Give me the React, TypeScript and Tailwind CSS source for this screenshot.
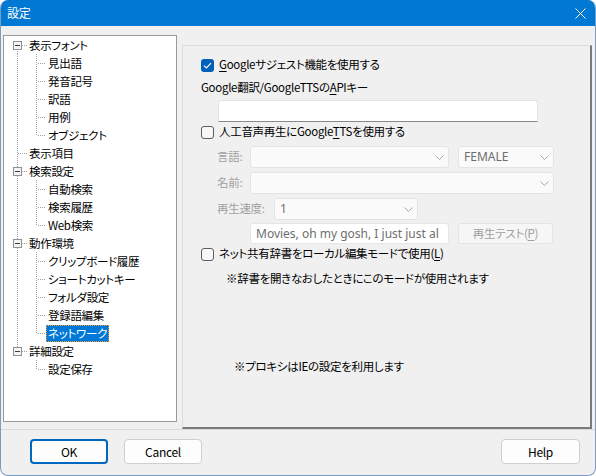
import React from "react";

type Node = { label: string; level: 0 | 1; hasChildren?: boolean; firstRoot?: boolean; lastRoot?: boolean; lastChild?: boolean; parentLast?: boolean; selected?: boolean };

const nodes: Node[] = [
  { label: "表示フォント", level: 0, hasChildren: true, firstRoot: true },
  { label: "見出語", level: 1 },
  { label: "発音記号", level: 1 },
  { label: "訳語", level: 1 },
  { label: "用例", level: 1 },
  { label: "オブジェクト", level: 1, lastChild: true },
  { label: "表示項目", level: 0 },
  { label: "検索設定", level: 0, hasChildren: true },
  { label: "自動検索", level: 1 },
  { label: "検索履歴", level: 1 },
  { label: "Web検索", level: 1, lastChild: true },
  { label: "動作環境", level: 0, hasChildren: true },
  { label: "クリップボード履歴", level: 1 },
  { label: "ショートカットキー", level: 1 },
  { label: "フォルダ設定", level: 1 },
  { label: "登録語編集", level: 1 },
  { label: "ネットワーク", level: 1, lastChild: true, selected: true },
  { label: "詳細設定", level: 0, hasChildren: true, lastRoot: true },
  { label: "設定保存", level: 1, lastChild: true, parentLast: true },
];

const DOT = "#a0a0a0";

function RootGutter({ n }: { n: Node }) {
  const x = 13.5;
  let v: React.ReactNode = null;
  if (n.level === 0) {
    const y1 = n.firstRoot ? 9 : 0;
    const y2 = n.lastRoot ? 9 : 18;
    v = <line x1={x} y1={y1} x2={x} y2={y2} stroke={DOT} strokeDasharray="1 1" />;
  } else if (!n.parentLast) {
    v = <line x1={x} y1={0} x2={x} y2={18} stroke={DOT} strokeDasharray="1 1" />;
  }
  return (
    <svg width="23" height="18" className="shrink-0" shapeRendering="crispEdges">
      {v}
      {n.level === 0 && <line x1={14} y1={9.5} x2={23} y2={9.5} stroke={DOT} strokeDasharray="1 1" />}
      {n.level === 0 && n.hasChildren && (
        <g>
          <rect x={9.5} y={5.5} width={8} height={8} fill="#f4f4f4" stroke="#919191" />
          <line x1={11} y1={9.5} x2={16} y2={9.5} stroke="#3c3c3c" />
        </g>
      )}
    </svg>
  );
}

function ChildGutter({ n }: { n: Node }) {
  const x = 9.5;
  return (
    <svg width="19" height="18" className="shrink-0" shapeRendering="crispEdges">
      <line x1={x} y1={0} x2={x} y2={n.lastChild ? 9 : 18} stroke={DOT} strokeDasharray="1 1" />
      <line x1={11} y1={9.5} x2={19} y2={9.5} stroke={DOT} strokeDasharray="1 1" />
    </svg>
  );
}

function Tree() {
  return (
    <div className="w-[174px] h-[387px] bg-white border border-[#9a9a9a] shrink-0">
      {nodes.map((n, i) => (
        <div key={i} className="flex items-center h-[18px]">
          <RootGutter n={n} />
          {n.level === 1 && <ChildGutter n={n} />}
          <span
            className={
              "px-[2px] leading-[17px] h-[17px] whitespace-nowrap " +
              (n.selected ? "bg-[#0078d7] text-white outline outline-1 outline-dotted outline-[#f0a030] -outline-offset-1" : "text-black")
            }
          >
            {n.label}
          </span>
        </div>
      ))}
    </div>
  );
}

function Checkbox({ checked }: { checked?: boolean }) {
  return checked ? (
    <span className="w-[13px] h-[13px] rounded-[3px] bg-[#005fb8] flex items-center justify-center shrink-0">
      <svg width="9" height="7" viewBox="0 0 9 7">
        <polyline points="1,3.6 3.4,6 8,1.2" fill="none" stroke="white" strokeWidth="1.1" />
      </svg>
    </span>
  ) : (
    <span className="w-[13px] h-[13px] rounded-[3px] border border-[#5d5d5d] bg-[#f7f7f7] shrink-0" />
  );
}

function Chevron() {
  return (
    <svg width="9" height="5" viewBox="0 0 9 5" className="shrink-0">
      <polyline points="0.5,0.5 4.5,4.5 8.5,0.5" fill="none" stroke="#a8a8a8" strokeWidth="1" />
    </svg>
  );
}

function Combo({ w, text }: { w: string; text?: string }) {
  return (
    <div className={`${w} h-[22px] bg-[#fafafa] border border-[#e4e4e4] rounded-[3px] flex items-center justify-between pl-[5px] pr-[4px] shrink-0`}>
      <span className="text-[#6e6e6e] text-[12px] tracking-normal" style={{ fontFamily: "'Noto Sans', sans-serif" }}>{text ?? ""}</span>
      <Chevron />
    </div>
  );
}

export default function App() {
  return (
    <div
      className="w-[596px] h-[476px] bg-white overflow-hidden text-[11.5px] tracking-[-0.3px] [font-feature-settings:'palt'] text-black"
      style={{ fontFamily: "'Noto Sans CJK JP', 'Noto Sans', sans-serif" }}
    >
      <div className="w-full h-full rounded-[8px] border border-[#7c9cc4] border-t-0 bg-[#f0f0f0] flex flex-col overflow-hidden">
        {/* title bar */}
        <div className="h-[26px] bg-[#0078d4] flex items-center justify-between pl-[6px] pr-[9px] shrink-0">
          <span className="text-white text-[12px]">設定</span>
          <svg width="11" height="11" viewBox="0 0 11 11">
            <path d="M0.5 0.5 L10.5 10.5 M10.5 0.5 L0.5 10.5" stroke="white" strokeWidth="1" />
          </svg>
        </div>

        {/* body */}
        <div className="flex items-start pl-[2px] pt-[9px] gap-[5px]">
          <Tree />
          <div className="mt-[10px] w-[410px] h-[384px] border-t border-l border-[#dcdcdc] border-r-2 border-b-2 border-r-[#7a7a7a] border-b-[#7a7a7a] pl-[18px] pt-[10px] flex flex-col">
            <div className="h-[18px] flex items-center gap-[5px]">
              <Checkbox checked />
              <span>
                <span className="underline underline-offset-2">G</span>oogleサジェスト機能を使用する
              </span>
            </div>
            <div className="mt-[5px] h-[18px] flex items-center">
              Google翻訳/GoogleTTSの<span className="underline underline-offset-2">A</span>PIキー
            </div>
            <div className="mt-[3px] ml-[17px] w-[320px] h-[22px] bg-white border border-[#e3e3e3] border-b-[#8a8a8a] rounded-t-[3px]" />
            <div className="mt-[1px] h-[18px] flex items-center gap-[5px]">
              <Checkbox />
              <span>
                人工音声再生にGoogle<span className="underline underline-offset-2">T</span>TSを使用する
              </span>
            </div>
            <div className="mt-[5px] ml-[16px] flex items-center">
              <span className="w-[33px] text-[#a0a0a0]">言語:</span>
              <Combo w="w-[199px]" />
              <div className="w-[9px]" />
              <Combo w="w-[96px]" text="FEMALE" />
            </div>
            <div className="mt-[4px] ml-[16px] flex items-center">
              <span className="w-[33px] text-[#a0a0a0]">名前:</span>
              <Combo w="w-[304px]" />
            </div>
            <div className="mt-[4px] ml-[16px] flex items-center">
              <span className="w-[57px] text-[#a0a0a0]">再生速度:</span>
              <Combo w="w-[144px]" text="1" />
            </div>
            <div className="mt-[3px] ml-[49px] flex items-center">
              <div
                className="w-[199px] h-[21px] bg-white border border-[#e6e6e6] rounded-[3px] overflow-hidden whitespace-nowrap pl-[5px] leading-[19px] text-[#6e6e6e] text-[12px] tracking-normal shrink-0"
                style={{ fontFamily: "'Noto Sans', sans-serif" }}
              >
                Movies, oh my gosh, I just just al
              </div>
              <div className="w-[9px]" />
              <div className="w-[95px] h-[21px] bg-[#f6f6f6] border border-[#e4e4e4] rounded-[3px] flex items-center justify-center text-[#a0a0a0] shrink-0">
                <span>
                  再生テスト(<span className="underline underline-offset-2">P</span>)
                </span>
              </div>
            </div>
            <div className="mt-[1px] h-[18px] flex items-center gap-[5px]">
              <Checkbox />
              <span>
                ネット共有辞書をローカル編集モードで使用(<span className="underline underline-offset-2">L</span>)
              </span>
            </div>
            <div className="mt-[7px] ml-[25px] h-[18px] flex items-center">
              ※辞書を開きなおしたときにこのモードが使用されます
            </div>
            <div className="mt-[70px] ml-[33px] h-[18px] flex items-center">
              ※プロキシはIEの設定を利用します
            </div>
          </div>
        </div>

        {/* separator */}
        <div className="h-px bg-[#dadada] w-full" />

        {/* buttons */}
        <div className="flex items-center pt-[9px] pl-[29px] pr-[15px]">
          <button className="w-[78px] h-[25px] rounded-[4px] border-2 border-[#0067c0] bg-[#fdfdfd] text-black text-[12px]">OK</button>
          <button className="ml-[16px] w-[78px] h-[25px] rounded-[4px] border border-[#cfcfcf] bg-[#fdfdfd] text-black text-[12px]">Cancel</button>
          <div className="flex-1" />
          <button className="w-[79px] h-[25px] rounded-[4px] border border-[#cfcfcf] bg-[#fdfdfd] text-black text-[12px]">Help</button>
        </div>
      </div>
    </div>
  );
}
